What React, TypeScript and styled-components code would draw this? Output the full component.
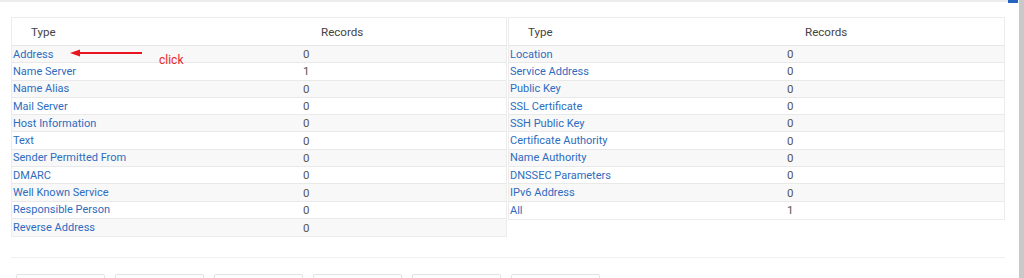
import styled, { createGlobalStyle } from 'styled-components'

const GlobalStyle = createGlobalStyle`
  html, body {
    margin: 0;
    padding: 0;
    background: #fff;
    overflow: hidden;
  }
  body {
    font-family: Roboto, "Liberation Sans", Arial, sans-serif;
    font-size: 12px;
    color: #555;
  }
`;

const Frame = styled.div`
  display: flex;
  height: 278px;
  overflow: hidden;
`;
const Main = styled.div`
  flex: 1;
  position: relative;
`;
const ScrollBar = styled.div`
  width: 5px;
  margin-left: 1px;
  background: #c9c9c9;
`;
const TopStrip = styled.div`
  display: flex;
  align-items: flex-start;
  height: 3px;
`;
const TopLine = styled.div`
  flex: 1;
  height: 2px;
  background: #ededed;
`;
const BlueTab = styled.div`
  width: 10px;
  height: 3px;
  background: #2563c0;
`;
const Tables = styled.div`
  display: flex;
  align-items: flex-start;
  gap: 1px;
  margin: 14px 0 0 11px;
`;
const Table = styled.div<{ $width: number }>`
  width: ${p => p.$width}px;
  border: 1px solid #ececec;
  box-sizing: border-box;
`;
const HeadRow = styled.div<{ $col: number }>`
  display: grid;
  grid-template-columns: ${p => p.$col}px 1fr;
  height: 28px;
  box-sizing: border-box;
  align-items: center;
  border-bottom: 1px solid #e6e6e6;
  color: #444;
  font-size: 12px;
`;
const HeadCell = styled.div<{ $pad?: number }>`
  padding-left: ${p => p.$pad ?? 18}px;
  font-size: 11.6px;
`;
const Row = styled.div<{ $col: number }>`
  display: grid;
  grid-template-columns: ${p => p.$col}px 1fr;
  height: 17.3px;
  box-sizing: border-box;
  align-items: center;
  border-bottom: 1px solid #e9e9e9;
  &:nth-child(odd) {
    background: #f8f8f8;
  }
  &:last-child {
    border-bottom: none;
  }
`;
const TypeLink = styled.a`
  color: #2d6cc0;
  text-decoration: none;
  font-size: 11px;
  padding-left: 1px;
  white-space: nowrap;
`;
const Count = styled.span`
  color: #555;
  font-size: 11.5px;
`;
const Divider = styled.div`
  height: 1px;
  background: #f0f0f0;
  margin: 20px 13px 0 11px;
`;
const Buttons = styled.div`
  display: flex;
  gap: 10px;
  margin: 16px 0 0 16px;
`;
const GhostButton = styled.div`
  width: 89px;
  height: 30px;
  border: 1px solid #e2e2e2;
  border-radius: 2px;
  box-sizing: border-box;
`;
const Note = styled.div`
  position: absolute;
  left: 68px;
  top: 46px;
  display: flex;
  align-items: flex-start;
  pointer-events: none;
`;
const NoteText = styled.span`
  color: #e8262b;
  font-size: 12px;
  margin: 7px 0 0 15px;
`;

const leftRows: [string, number][] = [
  ['Address', 0],
  ['Name Server', 1],
  ['Name Alias', 0],
  ['Mail Server', 0],
  ['Host Information', 0],
  ['Text', 0],
  ['Sender Permitted From', 0],
  ['DMARC', 0],
  ['Well Known Service', 0],
  ['Responsible Person', 0],
  ['Reverse Address', 0],
];
const rightRows: [string, number][] = [
  ['Location', 0],
  ['Service Address', 0],
  ['Public Key', 0],
  ['SSL Certificate', 0],
  ['SSH Public Key', 0],
  ['Certificate Authority', 0],
  ['Name Authority', 0],
  ['DNSSEC Parameters', 0],
  ['IPv6 Address', 0],
  ['All', 1],
];

const RecordTable = ({ rows, width, col }: { rows: [string, number][]; width: number; col: number }) => (
  <Table $width={width}>
    <HeadRow $col={col}>
      <HeadCell $pad={19}>Type</HeadCell>
      <HeadCell>Records</HeadCell>
    </HeadRow>
    <div>
      {rows.map(([name, n]) => (
        <Row key={name} $col={col}>
          <TypeLink href="#">{name}</TypeLink>
          <Count>{n}</Count>
        </Row>
      ))}
    </div>
  </Table>
);

const App = () => {
  return (
    <>
      <GlobalStyle />
      <Frame>
        <Main>
          <TopStrip>
            <TopLine />
            <BlueTab />
          </TopStrip>
          <Tables>
            <RecordTable rows={leftRows} width={496} col={291} />
            <RecordTable rows={rightRows} width={497} col={278} />
          </Tables>
          <Divider />
          <Buttons>
            {Array.from({ length: 6 }).map((_, i) => <GhostButton key={i} />)}
          </Buttons>
          <Note>
            <svg width="76" height="14" viewBox="0 0 76 14">
              <path d="M2 7 L12 3.5 L12 10.5 Z" fill="#e8141e" />
              <line x1="10" y1="7" x2="74" y2="7" stroke="#e8141e" strokeWidth="2" />
            </svg>
            <NoteText>click</NoteText>
          </Note>
        </Main>
        <ScrollBar />
      </Frame>
    </>
  );
}

export default App;
